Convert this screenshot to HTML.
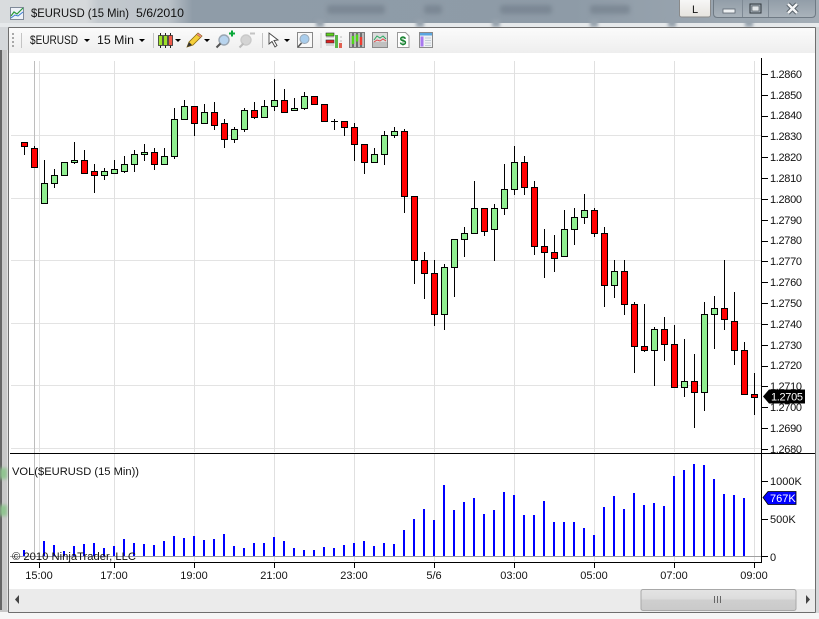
<!DOCTYPE html>
<html>
<head>
<meta charset="utf-8">
<style>
html,body{margin:0;padding:0;width:819px;height:619px;overflow:hidden;background:#fff}
svg{display:block;position:absolute;left:0;top:0}
text{font-family:"Liberation Sans",Arial,sans-serif;fill:#111}
</style>
</head>
<body>
<svg width="819" height="619" viewBox="0 0 819 619" xmlns="http://www.w3.org/2000/svg">
<defs>
<linearGradient id="band" x1="0" x2="1" y1="0" y2="0">
<stop offset="0" stop-color="#d9dcde"/><stop offset=".105" stop-color="#d6d9db"/><stop offset=".12" stop-color="#c3c9ce"/><stop offset=".205" stop-color="#bcc3c9"/><stop offset=".235" stop-color="#8f9ca8"/><stop offset=".7" stop-color="#8e9ba7"/><stop offset="1" stop-color="#a3adb6"/>
</linearGradient>
<linearGradient id="tb" x1="0" x2="0" y1="0" y2="1"><stop offset="0" stop-color="#fbfbfb"/><stop offset="1" stop-color="#eeeeee"/></linearGradient>
<linearGradient id="thumb" x1="0" x2="0" y1="0" y2="1"><stop offset="0" stop-color="#e4e4e4"/><stop offset=".45" stop-color="#dcdcdc"/><stop offset=".5" stop-color="#cfcfcf"/><stop offset="1" stop-color="#cacaca"/></linearGradient>
<linearGradient id="ctl" x1="0" x2="0" y1="0" y2="1"><stop offset="0" stop-color="#8f9ba6"/><stop offset="1" stop-color="#aab3bb"/></linearGradient>
<linearGradient id="lbtn" x1="0" x2="0" y1="0" y2="1"><stop offset="0" stop-color="#fafafa"/><stop offset="1" stop-color="#e6e3de"/></linearGradient>
<filter id="bl" x="-20%" y="-50%" width="140%" height="200%"><feGaussianBlur stdDeviation="2"/></filter>
<filter id="bl2" x="-100%" y="-50%" width="300%" height="200%"><feGaussianBlur stdDeviation="1.5"/></filter>
</defs>

<!-- blurred window frame -->
<rect width="819" height="619" fill="#d4d7da"/>
<rect width="819" height="23" fill="url(#band)"/>
<rect y="23" width="819" height="4" fill="#e6e9eb"/>
<g fill="#97a3ad" filter="url(#bl2)">
<rect x="316" y="20" width="8" height="7"/><rect x="416" y="20" width="8" height="7"/><rect x="492" y="20" width="8" height="7"/><rect x="590" y="20" width="8" height="7"/><rect x="668" y="20" width="8" height="7"/><rect x="745" y="20" width="8" height="7"/>
</g>
<g fill="#6f7c88" opacity=".6" filter="url(#bl)">
<rect x="327" y="5" width="58" height="9" rx="3"/>
<rect x="424" y="5" width="18" height="9" rx="3"/>
<rect x="500" y="5" width="52" height="9" rx="3"/>
<rect x="590" y="5" width="40" height="9" rx="3"/>
</g>
<rect x="0" y="50" width="9" height="569" fill="#c8c8c8"/>
<rect x="0" y="50" width="2" height="560" fill="#666"/>
<rect x="7" y="50" width="1" height="560" fill="#e2e2e2"/>
<g fill="#8fc48f" filter="url(#bl2)">
<rect x="0" y="468" width="7" height="11"/>
<rect x="0" y="505" width="7" height="11"/>
</g>
<rect x="0" y="612" width="819" height="7" fill="#f6f6f6"/>
<rect x="816" y="27" width="3" height="586" fill="#d5d7d9"/>
<rect x="8" y="27" width="808" height="586" fill="#6e6e6e" rx="1"/>

<!-- title -->
<g>
<rect x="10.5" y="7.5" width="13" height="12" fill="#eef2f8" stroke="#7f8a99"/>
<path d="M11 16l3-4 3 2 6-6" fill="none" stroke="#2a9a3c" stroke-width="1.2"/>
<path d="M11 18l4-3 3 1 5-4" fill="none" stroke="#3a7bd0" stroke-width="1"/>
</g>
<text x="31" y="17" font-size="12" textLength="98" lengthAdjust="spacingAndGlyphs">$EURUSD (15 Min)</text>
<text x="136" y="17" font-size="12" textLength="48" lengthAdjust="spacingAndGlyphs">5/6/2010</text>

<!-- window buttons -->
<rect x="679.5" y="-3" width="31" height="20" rx="2" fill="url(#lbtn)" stroke="#8a8a8a"/>
<text x="695" y="13" font-size="11" text-anchor="middle" fill="#112">L</text>
<path d="M713.5 -2V13.5Q713.5 17.5 717.5 17.5H811.5Q815.5 17.5 815.5 13.5V-2Z" fill="url(#ctl)" stroke="#6f7a84"/>
<path d="M742.5 0v17M768.5 0v17" stroke="#7e8994"/>
<rect x="723" y="9" width="12" height="4" fill="#eef1f3" stroke="#5c6670" stroke-width=".8"/>
<rect x="750" y="4" width="11" height="9" fill="none" stroke="#30373d" stroke-width="1"/>
<rect x="752" y="6" width="7" height="5" fill="#e2e6e9" stroke="#454c52" stroke-width=".6"/>
<path d="M788 4l9 9M797 4l-9 9" stroke="#4e5860" stroke-width="4.4"/>
<path d="M788 4l9 9M797 4l-9 9" stroke="#f4f5f6" stroke-width="2.6"/>

<!-- content area -->
<rect x="9" y="28" width="806" height="584" fill="#fff"/>
<rect x="9" y="28" width="806" height="25" fill="url(#tb)"/>

<!-- toolbar -->
<g fill="#a8a8a8"><rect x="12" y="33" width="2" height="2"/><rect x="12" y="37" width="2" height="2"/><rect x="12" y="41" width="2" height="2"/><rect x="12" y="45" width="2" height="2"/></g>
<rect x="21" y="33" width="1" height="15" fill="#c4c4c4"/>
<text x="30" y="44" font-size="12" textLength="48" lengthAdjust="spacingAndGlyphs">$EURUSD</text>
<path d="M84 39h6l-3 3z" fill="#000"/>
<text x="97" y="44" font-size="12" textLength="37" lengthAdjust="spacingAndGlyphs">15 Min</text>
<path d="M139 39h6l-3 3z" fill="#000"/>
<rect x="153" y="33" width="1" height="15" fill="#c4c4c4"/>
<!-- candle icon -->
<path d="M160.5 33v15M165.5 33v15M170.5 33v15" stroke="#222"/>
<rect x="158.5" y="35.5" width="4" height="10" fill="#9ee22a" stroke="#333" stroke-width=".8"/>
<rect x="163.5" y="35.5" width="4" height="10" fill="#9ee22a" stroke="#333" stroke-width=".8"/>
<rect x="168.5" y="35.5" width="4" height="10" fill="#f05a4a" stroke="#333" stroke-width=".8"/>
<path d="M175 39h6l-3 3z" fill="#000"/>
<!-- pencil -->
<path d="M187 47l2-5 9-9 4 3-9 9z" fill="#f5cf3a" stroke="#8a6a10" stroke-width=".8"/>
<path d="M198 33l4 3-1.500 1.500-4-3z" fill="#e88" stroke="#8a6a10" stroke-width=".5"/>
<path d="M187 47l2-5 3 3z" fill="#333"/>
<path d="M204 39h6l-3 3z" fill="#000"/>
<!-- zoom in -->
<circle cx="224" cy="40" r="5" fill="#b8d4ee" stroke="#9aa6b2" stroke-width="1.400"/>
<path d="M216.500 47.500l4-4" stroke="#555" stroke-width="2"/>
<path d="M229 33.500h6M232 30.500v6" stroke="#0aa83a" stroke-width="2"/>
<!-- zoom out -->
<circle cx="246" cy="40" r="5" fill="#d4d4d4" stroke="#cacaca" stroke-width="1.400"/>
<path d="M239.500 47.500l4-4" stroke="#bbb" stroke-width="2"/>
<path d="M250 33.500h5" stroke="#c4c4c4" stroke-width="2"/>
<rect x="262" y="33" width="1" height="15" fill="#c4c4c4"/>
<!-- cursor -->
<path d="M269 33v11l3-2.500 3 5.500 2-1.500-3-5 4-.5z" fill="#fff" stroke="#444" stroke-width=".9"/>
<path d="M284 39h6l-3 3z" fill="#000"/>
<!-- zoom box -->
<rect x="297.500" y="32.500" width="15" height="15" fill="#f8f8f8" stroke="#888"/>
<circle cx="304.500" cy="39" r="4.500" fill="#a9cdec" stroke="#9aa8b6"/>
<path d="M298 47l3.500-4" stroke="#555" stroke-width="1.600"/>
<rect x="320.500" y="33" width="1" height="15" fill="#d0d0d0"/>
<!-- ladder icon -->
<rect x="326" y="33" width="8" height="3" fill="#5ed21c" stroke="#333" stroke-width=".6"/>
<rect x="326" y="40" width="8" height="3" fill="#e02020" stroke="#333" stroke-width=".6"/>
<rect x="335" y="35" width="3" height="13" fill="#59b848"/>
<rect x="339" y="43" width="3" height="5" fill="#e06050"/>
<path d="M326 37h8M326 45h8M340 37h2M340 41h2" stroke="#bbb"/>
<!-- candle box -->
<rect x="349.500" y="32.500" width="15" height="15" fill="#bcbcbc" stroke="#7c7c7c"/>
<path d="M353 33v14M357 33v14M361 33v14" stroke="#222"/>
<rect x="351.800" y="36" width="2.400" height="8" fill="#4fd61a"/><rect x="355.800" y="34.500" width="2.400" height="7" fill="#4fd61a"/><rect x="359.800" y="37" width="2.400" height="8" fill="#ee3b30"/>
<!-- chart box -->
<rect x="372.500" y="32.500" width="15" height="15" fill="#dcdcdc" stroke="#8a8a8a"/>
<rect x="373" y="42" width="14" height="5" fill="#c0c0c0"/>
<path d="M374 40l3-4 3 2 3-2 3 3" fill="none" stroke="#2aa860"/>
<path d="M374 42l3-2 3 1 3-2 3 2" fill="none" stroke="#e04a4a"/>
<!-- dollar doc -->
<path d="M397.500 32.500h8l3.500 3.500v11.500h-11.500z" fill="#fff" stroke="#999"/>
<text x="403" y="45" font-size="12" font-weight="700" text-anchor="middle" style="fill:#14802e">$</text>
<!-- props -->
<rect x="419.500" y="32.500" width="13" height="15" fill="#eef0f2" stroke="#8a8a8a"/>
<rect x="420" y="33" width="12" height="2.500" fill="#5aa6e0"/>
<rect x="420.500" y="36.500" width="3" height="10" fill="#a878f0"/>
<path d="M425 38h6M425 40.500h6M425 43h6M425 45.500h6" stroke="#c2ccd6"/>

<!-- grid -->
<g shape-rendering="crispEdges">
<path d="M11 73.500H761M11 135.500H761M11 198.500H761M11 260.500H761M11 323.500H761M11 385.500H761M11 448.500H761" stroke="#e3e3e3" fill="none"/>
<path d="M39.500 61V452M114.500 61V452M194.500 61V452M274.500 61V452M354.500 61V452M434.500 61V452M514.500 61V452M594.500 61V452M674.500 61V452M754.500 61V452M39.500 454V561M114.500 454V561M194.500 454V561M274.500 454V561M354.500 454V561M434.500 454V561M514.500 454V561M594.500 454V561M674.500 454V561M754.500 454V561" stroke="#e0e0e0" fill="none"/>
<path d="M34.500 61V556" stroke="#bdbdbd" fill="none"/>

<!-- wicks -->
<path fill="none" stroke="#000" d="M24.500 142V155M34.500 146V167M44.500 160V203M54.500 169V188M64.500 162V175M74.500 142V164M84.500 150V173M94.500 164V193M104.500 168V180M114.500 160V173M124.500 156V173M134.500 150V172M144.500 144V161M154.500 148V170M164.500 148V165M174.500 108V159M184.500 100V119M194.500 106V136M204.500 104V123M214.500 102V130M224.500 119V148M234.500 127V143M244.500 108V132M254.500 102V119M264.500 100V117M274.500 79V111M284.500 89V112M294.500 98V110M304.500 92V110M334.500 119V130M331 121.500H338M344.500 121V136M354.500 123V161M364.500 144V174M374.500 148V162M384.500 131V165M394.500 127V138M404.500 129V213M414.500 196V284M424.500 252V299M434.500 260V326M444.500 264V330M454.500 239V297M464.500 227V257M474.500 181V233M484.500 208V236M494.500 204V261M504.500 164V215M514.500 146V195M524.500 156V195M534.500 181V255M544.500 229V278M554.500 235V272M564.500 210V256M574.500 208V245M584.500 194V224M594.500 208V237M604.500 227V307M614.500 260V298M624.500 260V315M634.500 302V373M644.500 304V352M654.500 327V386M664.500 317V361M674.500 325V387M684.500 339V397M694.500 354V428M704.500 302V411M714.500 296V349M724.500 260V330M734.500 292V365M744.500 342V394M754.500 373V415"/>

<!-- green bodies -->
<path fill="#90ee90" stroke="#000" d="M41.500 183.500h6v20h-6zM51.500 175.500h6v8h-6zM61.500 162.500h6v13h-6zM71.500 160.500h6v2h-6zM101.500 171.500h6v4h-6zM111.500 169.500h6v4h-6zM121.500 164.500h6v7h-6zM131.500 154.500h6v10h-6zM141.500 152.500h6v2h-6zM161.500 156.500h6v8h-6zM171.500 119.500h6v37h-6zM181.500 106.500h6v13h-6zM201.500 112.500h6v11h-6zM231.500 129.500h6v10h-6zM241.500 110.500h6v19h-6zM261.500 106.500h6v11h-6zM271.500 100.500h6v6h-6zM291.500 108.500h6v2h-6zM301.500 96.500h6v12h-6zM371.500 154.500h6v8h-6zM381.500 135.500h6v19h-6zM391.500 131.500h6v4h-6zM441.500 267.500h6v47h-6zM451.500 239.500h6v28h-6zM461.500 233.500h6v6h-6zM471.500 208.500h6v25h-6zM491.500 208.500h6v21h-6zM501.500 189.500h6v19h-6zM511.500 162.500h6v27h-6zM561.500 229.500h6v27h-6zM571.500 217.500h6v12h-6zM581.500 210.500h6v7h-6zM611.500 271.500h6v14h-6zM651.500 329.500h6v21h-6zM681.500 381.500h6v6h-6zM701.500 314.500h6v78h-6zM711.500 308.500h6v6h-6z"/>

<!-- red bodies -->
<path fill="#ff0000" stroke="#000" d="M21.500 142.500h6v4h-6zM31.500 148.500h6v19h-6zM81.500 160.500h6v13h-6zM91.500 171.500h6v4h-6zM151.500 152.500h6v12h-6zM191.500 106.500h6v17h-6zM211.500 112.500h6v13h-6zM221.500 123.500h6v16h-6zM251.500 110.500h6v7h-6zM281.500 100.500h6v12h-6zM311.500 96.500h6v8h-6zM321.500 104.500h6v17h-6zM341.500 121.500h6v6h-6zM351.500 127.500h6v17h-6zM361.500 144.500h6v18h-6zM401.500 131.500h6v65h-6zM411.500 196.500h6v64h-6zM421.500 260.500h6v13h-6zM431.500 273.500h6v41h-6zM481.500 208.500h6v23h-6zM521.500 162.500h6v25h-6zM531.500 187.500h6v59h-6zM541.500 246.500h6v6h-6zM551.500 252.500h6v6h-6zM591.500 210.500h6v23h-6zM601.500 233.500h6v52h-6zM621.500 271.500h6v33h-6zM631.500 304.500h6v42h-6zM641.500 346.500h6v4h-6zM661.500 329.500h6v15h-6zM671.500 344.500h6v43h-6zM691.500 381.500h6v11h-6zM721.500 308.500h6v11h-6zM731.500 321.500h6v29h-6zM741.500 350.500h6v44h-6zM751.500 394.500h6v3h-6z"/>

<!-- volume bars -->
<path fill="none" stroke="#0000ff" stroke-width="2" d="M24 550V556M44 541V556M54 545V556M64 551V556M74 546V556M84 544V556M94 543V556M104 548V556M114 546V556M124 539V556M134 543V556M144 544V556M154 545V556M164 541V556M174 536V556M184 538V556M194 536V556M204 540V556M214 539V556M224 534V556M234 546V556M244 548V556M254 543V556M264 543V556M274 537V556M284 541V556M294 548V556M304 550V556M314 550V556M324 547V556M334 548V556M344 545V556M354 543V556M364 541V556M374 546V556M384 543V556M394 544V556M404 530V556M414 519V556M424 509V556M434 520V556M444 485V556M454 510V556M464 502V556M474 498V556M484 514V556M494 510V556M504 492V556M514 495V556M524 515V556M534 515V556M544 501V556M554 522V556M564 522V556M574 522V556M584 528V556M594 535V556M604 507V556M614 496V556M624 509V556M634 493V556M644 505V556M654 503V556M664 506V556M674 476V556M684 470V556M694 464V556M704 465V556M714 479V556M724 494V556M734 495V556M744 498V556"/>

<rect x="10" y="556" width="752" height="1" fill="#a0a0a0"/>
<rect x="10" y="453" width="805" height="1" fill="#000"/>
<rect x="10" y="562" width="752" height="1" fill="#000"/>
<rect x="761" y="58" width="1" height="505" fill="#000"/>

<!-- axis ticks -->
<path stroke="#000" fill="none" d="M39.500 562v6M114.500 562v6M194.500 562v6M274.500 562v6M354.500 562v6M434.500 562v6M514.500 562v6M594.500 562v6M674.500 562v6M754.500 562v6M762 74.500h6M762 95.500h6M762 116.500h6M762 136.500h6M762 157.500h6M762 178.500h6M762 199.500h6M762 220.500h6M762 241.500h6M762 261.500h6M762 282.500h6M762 303.500h6M762 324.500h6M762 345.500h6M762 366.500h6M762 386.500h6M762 407.500h6M762 428.500h6M762 449.500h6M762 481.500h6M762 519.500h6M762 556.500h6"/>
</g>

<!-- price labels -->
<g font-size="11">
<text x="770" y="78" textLength="32">1.2860</text>
<text x="770" y="99" textLength="32">1.2850</text>
<text x="770" y="119" textLength="32">1.2840</text>
<text x="770" y="140" textLength="32">1.2830</text>
<text x="770" y="161" textLength="32">1.2820</text>
<text x="770" y="182" textLength="32">1.2810</text>
<text x="770" y="203" textLength="32">1.2800</text>
<text x="770" y="224" textLength="32">1.2790</text>
<text x="770" y="244" textLength="32">1.2780</text>
<text x="770" y="265" textLength="32">1.2770</text>
<text x="770" y="286" textLength="32">1.2760</text>
<text x="770" y="307" textLength="32">1.2750</text>
<text x="770" y="328" textLength="32">1.2740</text>
<text x="770" y="349" textLength="32">1.2730</text>
<text x="770" y="369" textLength="32">1.2720</text>
<text x="770" y="390" textLength="32">1.2710</text>
<text x="770" y="411" textLength="32">1.2700</text>
<text x="770" y="432" textLength="32">1.2690</text>
<text x="770" y="453" textLength="32">1.2680</text>
</g>
<path d="M763 396.500l6-7h36v14h-36z" fill="#000"/>
<text x="771" y="400.500" font-size="11" textLength="32" style="fill:#fff">1.2705</text>

<!-- volume labels -->
<g font-size="11">
<text x="770" y="485">1000K</text>
<text x="770" y="523">500K</text>
<text x="770" y="561">0</text>
</g>
<path d="M763 497.500l5-6h28v13h-28z" fill="#0000ff" stroke="#000" stroke-width=".8"/>
<text x="770" y="502" font-size="11" style="fill:#fff">767K</text>

<!-- time labels -->
<g font-size="11" text-anchor="middle">
<text x="39" y="579">15:00</text>
<text x="114" y="579">17:00</text>
<text x="194" y="579">19:00</text>
<text x="274" y="579">21:00</text>
<text x="354" y="579">23:00</text>
<text x="434" y="579">5/6</text>
<text x="514" y="579">03:00</text>
<text x="594" y="579">05:00</text>
<text x="674" y="579">07:00</text>
<text x="754" y="579">09:00</text>
</g>

<text x="12" y="475" font-size="11" textLength="127" lengthAdjust="spacingAndGlyphs">VOL($EURUSD (15 Min))</text>
<text x="12" y="560" font-size="11" textLength="124" lengthAdjust="spacingAndGlyphs">© 2010 NinjaTrader, LLC</text>

<!-- scrollbar -->
<rect x="9" y="589" width="806" height="23" fill="#ebebeb"/>
<path d="M19 595v9l-4-4.500z" fill="#444"/>
<path d="M806 595v9l4-4.500z" fill="#444"/>
<rect x="641" y="589.500" width="155" height="21" rx="2" fill="url(#thumb)" stroke="#a8a8a8"/>
<path d="M714.500 596v7M717.500 596v7M720.500 596v7" stroke="#666"/>
</svg>
</body>
</html>
